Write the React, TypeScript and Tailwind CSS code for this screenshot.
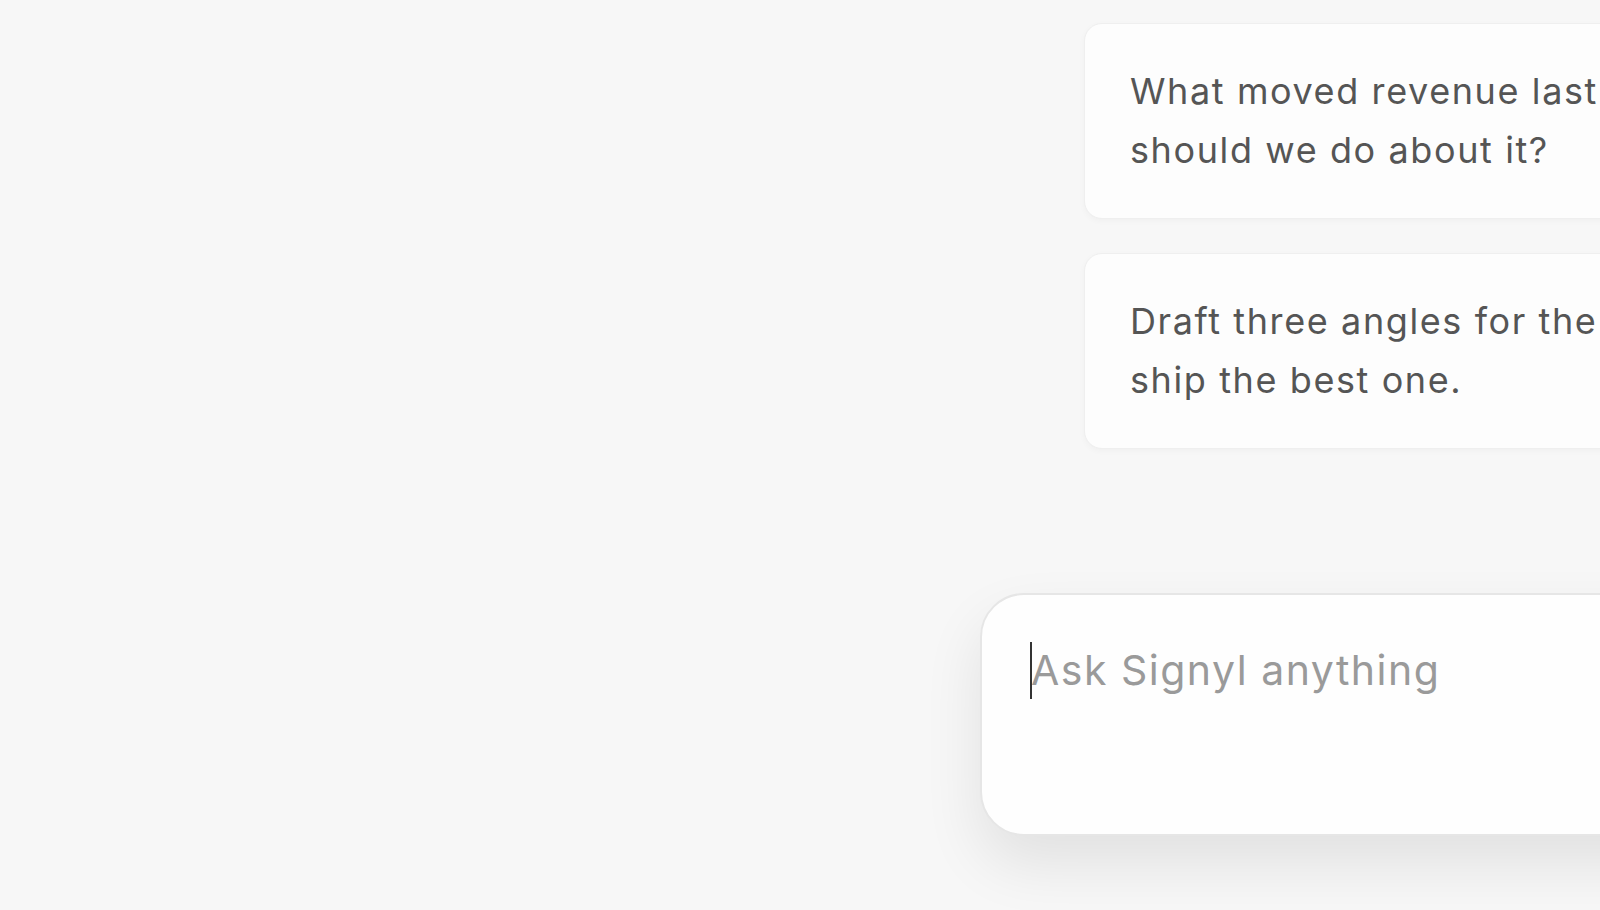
import React from "react";

const prompts = [
  ["What moved revenue last week, and what", "should we do about it?"],
  ["Draft three angles for the launch email and", "ship the best one."],
];

export default function App() {
  return (
    <div
      className="h-[910px] w-[1600px] overflow-hidden bg-[#f7f7f7]"
      style={{ fontFamily: "Inter, 'Noto Sans', sans-serif" }}
    >
      <div className="flex flex-col pt-[23px]">
        {/* Suggested prompts */}
        <div className="ml-[1084px] flex flex-col gap-[34px]">
          {prompts.map((lines, i) => (
            <div
              key={i}
              className="w-[860px] shrink-0 rounded-[18px] border border-[#efefef] bg-[#fdfdfd] px-[45px] py-[38px] shadow-[0_2px_6px_rgba(0,0,0,0.03)]"
            >
              <p className="whitespace-nowrap text-[36px] leading-[59px] tracking-[1.6px] text-[#555555]">
                {lines[0]}
                <br />
                {lines[1]}
              </p>
            </div>
          ))}
        </div>

        {/* Composer */}
        <div className="relative ml-[980px] mt-[144px] h-[243px] w-[760px] shrink-0 rounded-[44px] border-2 border-[#e6e6e6] bg-[#fefefe] shadow-[0_28px_60px_rgba(0,0,0,0.09)]">
          <textarea
            className="h-full w-full resize-none bg-transparent pl-[49px] pt-[47px] text-[41px] leading-[57px] tracking-[1.5px] text-[#333] caret-transparent outline-none placeholder:text-[#9a9a9a]"
            placeholder="Ask Signyl anything"
          />
          <span className="absolute left-[48px] top-[47px] h-[57px] w-[2px] bg-[#333]" />
        </div>
      </div>
    </div>
  );
}
